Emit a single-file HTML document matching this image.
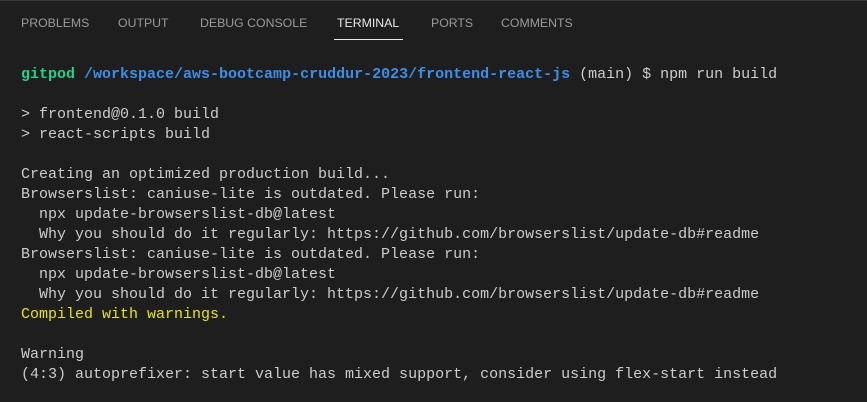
<!DOCTYPE html>
<html><head><style>
body{margin:0;width:867px;height:402px;background:#1e1e1e;overflow:hidden;position:relative;border-top:1px solid #3a3a3a;box-sizing:border-box}
.tab{position:absolute;top:15px;font:12.3px "Liberation Sans",sans-serif;color:#9a9a9a;white-space:nowrap}
.act{color:#e8e8e8}
.ul{position:absolute;left:334px;top:38px;width:69px;height:1px;background:#e8e8e8}
pre{position:absolute;left:21px;top:64px;margin:0;font:15px/20px "Liberation Mono",monospace;color:#cccccc}
.g{color:#23d18b;font-weight:bold}.b{color:#3b8eea;font-weight:bold}.y{color:#e5e510}
</style></head><body>
<div class="tab" style="left:21px">PROBLEMS</div>
<div class="tab" style="left:118px">OUTPUT</div>
<div class="tab" style="left:200px">DEBUG CONSOLE</div>
<div class="tab act" style="left:337px">TERMINAL</div>
<div class="tab" style="left:431px">PORTS</div>
<div class="tab" style="left:501px">COMMENTS</div>
<div class="ul"></div>
<pre><span class="g">gitpod</span> <span class="b">/workspace/aws-bootcamp-cruddur-2023/frontend-react-js</span> (main) $ npm run build

&gt; frontend@0.1.0 build
&gt; react-scripts build

Creating an optimized production build...
Browserslist: caniuse-lite is outdated. Please run:
  npx update-browserslist-db@latest
  Why you should do it regularly: https://github.com/browserslist/update-db#readme
Browserslist: caniuse-lite is outdated. Please run:
  npx update-browserslist-db@latest
  Why you should do it regularly: https://github.com/browserslist/update-db#readme
<span class="y">Compiled with warnings.</span>

Warning
(4:3) autoprefixer: start value has mixed support, consider using flex-start instead</pre>
</body></html>
